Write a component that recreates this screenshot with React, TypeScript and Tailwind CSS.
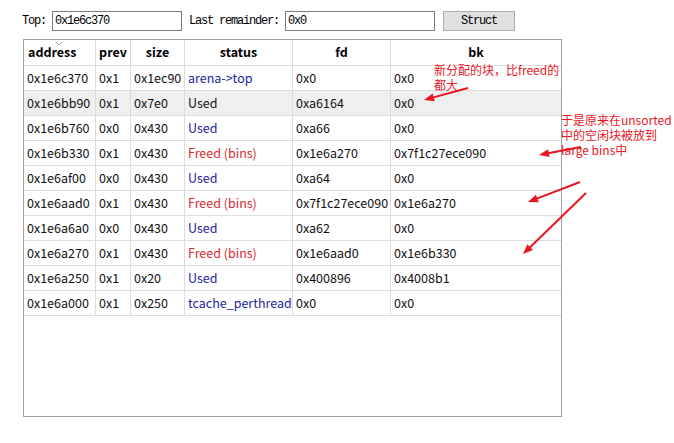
import React from "react";

type Row = {
  address: string;
  prev: string;
  size: string;
  status: string;
  kind: "blue" | "red" | "black";
  fd: string;
  bk: string;
  selected?: boolean;
};

const rows: Row[] = [
  { address: "0x1e6c370", prev: "0x1", size: "0x1ec90", status: "arena->top", kind: "blue", fd: "0x0", bk: "0x0" },
  { address: "0x1e6bb90", prev: "0x1", size: "0x7e0", status: "Used", kind: "black", fd: "0xa6164", bk: "0x0", selected: true },
  { address: "0x1e6b760", prev: "0x0", size: "0x430", status: "Used", kind: "blue", fd: "0xa66", bk: "0x0" },
  { address: "0x1e6b330", prev: "0x1", size: "0x430", status: "Freed (bins)", kind: "red", fd: "0x1e6a270", bk: "0x7f1c27ece090" },
  { address: "0x1e6af00", prev: "0x0", size: "0x430", status: "Used", kind: "blue", fd: "0xa64", bk: "0x0" },
  { address: "0x1e6aad0", prev: "0x1", size: "0x430", status: "Freed (bins)", kind: "red", fd: "0x7f1c27ece090", bk: "0x1e6a270" },
  { address: "0x1e6a6a0", prev: "0x0", size: "0x430", status: "Used", kind: "blue", fd: "0xa62", bk: "0x0" },
  { address: "0x1e6a270", prev: "0x1", size: "0x430", status: "Freed (bins)", kind: "red", fd: "0x1e6aad0", bk: "0x1e6b330" },
  { address: "0x1e6a250", prev: "0x1", size: "0x20", status: "Used", kind: "blue", fd: "0x400896", bk: "0x4008b1" },
  { address: "0x1e6a000", prev: "0x1", size: "0x250", status: "tcache_perthread", kind: "blue", fd: "0x0", bk: "0x0" },
];

const cellFont = { fontFamily: '"Noto Sans CJK SC", "Noto Sans", sans-serif' };
const monoFont = { fontFamily: '"Liberation Mono", "DejaVu Sans Mono", monospace' };

function Arrow({ x1, y1, x2, y2 }: { x1: number; y1: number; x2: number; y2: number }) {
  const dx = x2 - x1;
  const dy = y2 - y1;
  const len = Math.sqrt(dx * dx + dy * dy);
  const ux = dx / len;
  const uy = dy / len;
  const hl = 10;
  const hw = 4;
  const bx = x2 - ux * hl;
  const by = y2 - uy * hl;
  const p1 = `${x2},${y2}`;
  const p2 = `${bx - uy * hw},${by + ux * hw}`;
  const p3 = `${bx + uy * hw},${by - ux * hw}`;
  return (
    <g>
      <line x1={x1} y1={y1} x2={bx + ux * 2} y2={by + uy * 2} stroke="#e8161f" strokeWidth={2} />
      <polygon points={`${p1} ${p2} ${p3}`} fill="#e8161f" />
    </g>
  );
}

export default function App() {
  const colW = ["w-[72px]", "w-[35px]", "w-[54px]", "w-[108px]", "w-[98px]", "w-[170px]"];
  return (
    <div className="relative w-[674px] h-[443px] bg-white overflow-hidden">
      {/* toolbar */}
      <div className="flex items-center pt-[11px] pl-[22px] h-[31px] text-[12px] text-black tracking-[-1.2px]" style={monoFont}>
        <span className="w-[30px]">Top:</span>
        <div className="w-[130px] h-[20px] border border-[#7a7a7a] flex items-center pl-[2px]">0x1e6c370</div>
        <span className="ml-[7px] w-[96px]">Last remainder:</span>
        <div className="w-[150px] h-[20px] border border-[#7a7a7a] flex items-center pl-[2px]">0x0</div>
        <div className="ml-[8px] w-[72px] h-[20px] border border-[#adadad] bg-[#e1e1e1] flex items-center justify-center">
          Struct
        </div>
      </div>

      {/* table */}
      <div className="ml-[23px] mt-[8px] w-[539px] h-[378px] border border-[#a0a0a0] bg-white" style={cellFont}>
        <div className="flex h-[26px] border-b border-[#dcdcdc] text-[12.5px] font-bold text-black">
          <div className={`${colW[0]} relative border-r border-[#dcdcdc] flex items-center pl-[4px]`}>
            address
            <svg className="absolute left-[31px] top-[1px]" width="8" height="5" viewBox="0 0 8 5">
              <path d="M0.5 0.5 L4 4 L7.5 0.5" fill="none" stroke="#a8a8a8" strokeWidth="1" />
            </svg>
          </div>
          <div className={`${colW[1]} border-r border-[#dcdcdc] flex items-center justify-center`}>prev</div>
          <div className={`${colW[2]} border-r border-[#dcdcdc] flex items-center justify-center`}>size</div>
          <div className={`${colW[3]} border-r border-[#dcdcdc] flex items-center justify-center`}>status</div>
          <div className={`${colW[4]} border-r border-[#dcdcdc] flex items-center justify-center`}>fd</div>
          <div className={`${colW[5]} flex items-center justify-center`}>bk</div>
        </div>
        {rows.map((r) => (
          <div
            key={r.address}
            className={`flex h-[25px] border-b border-[#dcdcdc] text-[12.5px] text-[#111] ${r.selected ? "bg-[#efefef]" : ""}`}
          >
            <div className={`${colW[0]} border-r border-[#dcdcdc] flex items-center pl-[3px] whitespace-nowrap`}>{r.address}</div>
            <div className={`${colW[1]} border-r border-[#dcdcdc] flex items-center pl-[3px] whitespace-nowrap`}>{r.prev}</div>
            <div className={`${colW[2]} border-r border-[#dcdcdc] flex items-center pl-[3px] whitespace-nowrap`}>{r.size}</div>
            <div
              className={`${colW[3]} border-r border-[#dcdcdc] flex items-center pl-[3px] whitespace-nowrap ${
                r.kind === "blue" ? "text-[#2424a0]" : r.kind === "red" ? "text-[#d92a33]" : "text-[#111]"
              }`}
            >
              {r.status}
            </div>
            <div className={`${colW[4]} border-r border-[#dcdcdc] flex items-center pl-[3px] whitespace-nowrap overflow-hidden`}>{r.fd}</div>
            <div className={`${colW[5]} flex items-center pl-[3px] whitespace-nowrap`}>{r.bk}</div>
          </div>
        ))}
      </div>

      {/* annotations */}
      <div
        className="absolute left-[434px] top-[62px] text-[12px] leading-[15px] text-[#e8161f] whitespace-nowrap"
        style={cellFont}
      >
        新分配的块，比freed的
        <br />
        都大
      </div>
      <div
        className="absolute left-[561px] top-[112px] text-[12px] leading-[15px] text-[#e8161f] whitespace-nowrap"
        style={cellFont}
      >
        于是原来在unsorted
        <br />
        中的空闲块被放到
        <br />
        large bins中
      </div>
      <svg className="absolute left-0 top-0 pointer-events-none" width="674" height="443" viewBox="0 0 674 443">
        <Arrow x1={468} y1={88} x2={424} y2={100} />
        <Arrow x1={581} y1={147} x2={539} y2={155} />
        <Arrow x1={580} y1={182} x2={528} y2={202} />
        <Arrow x1={586} y1={193} x2={523} y2={254} />
      </svg>
    </div>
  );
}
